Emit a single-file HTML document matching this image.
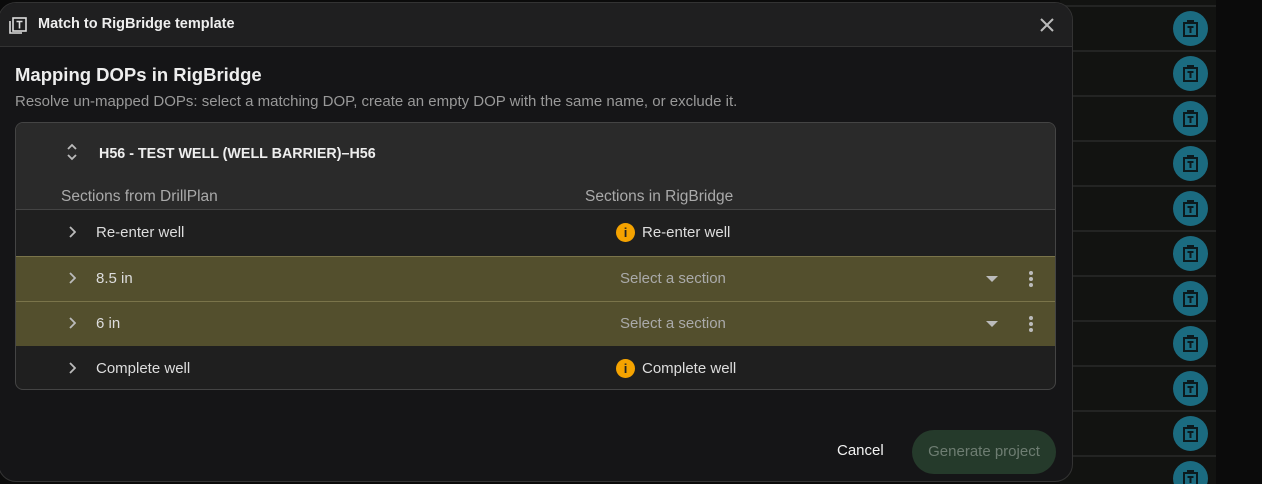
<!DOCTYPE html>
<html><head><style>
*{box-sizing:border-box;margin:0;padding:0}
html,body{width:1262px;height:484px;overflow:hidden}
body{background:#0b0b0b;font-family:"Liberation Sans",sans-serif;position:relative;color:#e6e6e6}
.bgcol{position:absolute;left:1060px;top:0;width:156px;height:484px;background:#121311}
.sep{position:absolute;left:1060px;width:156px;height:2px;background:#232423}
.tic{position:absolute;left:1173px;width:35px;height:35px;border-radius:50%;background:#1b6b80}
.tic svg{position:absolute;left:8px;top:8px}
.dlg{position:absolute;left:-2px;top:2px;width:1075px;height:480px;background:#151517;border:1px solid #333;border-radius:18px;overflow:hidden}
.hdr{height:44px;background:#1f1f20;border-bottom:1px solid #333;position:relative}
.hdr .t{position:absolute;left:39px;top:13px;font-size:14.5px;font-weight:bold;color:#eee}
.card{position:absolute;left:16px;top:119px;width:1041px;height:268px;border:1px solid #444;border-radius:8px;overflow:hidden;background:#1f1f1f}
.ch{height:87px;background:#2a2a2a;border-bottom:1px solid #444;position:relative}
.row{position:absolute;left:0;width:1041px;height:45px;font-size:15px;color:#ddd}
.row span{position:absolute;top:14px}
.hl{background:#534f2d;border-top:1px solid #7a744a}
.info{position:absolute;left:600px;top:13px;width:19px;height:19px;border-radius:50%;background:#f5a300;color:#222;font-size:13px;font-weight:bold;text-align:center;line-height:19px}
</style></head><body>
<div class="bgcol"></div>
<div class="sep" style="top:5px"></div><div class="sep" style="top:50px"></div><div class="sep" style="top:95px"></div><div class="sep" style="top:140px"></div><div class="sep" style="top:185px"></div><div class="sep" style="top:230px"></div><div class="sep" style="top:275px"></div><div class="sep" style="top:320px"></div><div class="sep" style="top:365px"></div><div class="sep" style="top:410px"></div><div class="sep" style="top:455px"></div>
<div class="tic" style="top:11px"><svg width="19" height="19" viewBox="0 0 19 19" fill="none" stroke="#0c1a1e" stroke-width="2"><rect x="3" y="4" width="13" height="13"/><path d="M7 4V2h5v2M6.5 8h6M9.5 8v6"/></svg></div>
<div class="tic" style="top:56px"><svg width="19" height="19" viewBox="0 0 19 19" fill="none" stroke="#0c1a1e" stroke-width="2"><rect x="3" y="4" width="13" height="13"/><path d="M7 4V2h5v2M6.5 8h6M9.5 8v6"/></svg></div>
<div class="tic" style="top:101px"><svg width="19" height="19" viewBox="0 0 19 19" fill="none" stroke="#0c1a1e" stroke-width="2"><rect x="3" y="4" width="13" height="13"/><path d="M7 4V2h5v2M6.5 8h6M9.5 8v6"/></svg></div>
<div class="tic" style="top:146px"><svg width="19" height="19" viewBox="0 0 19 19" fill="none" stroke="#0c1a1e" stroke-width="2"><rect x="3" y="4" width="13" height="13"/><path d="M7 4V2h5v2M6.5 8h6M9.5 8v6"/></svg></div>
<div class="tic" style="top:191px"><svg width="19" height="19" viewBox="0 0 19 19" fill="none" stroke="#0c1a1e" stroke-width="2"><rect x="3" y="4" width="13" height="13"/><path d="M7 4V2h5v2M6.5 8h6M9.5 8v6"/></svg></div>
<div class="tic" style="top:236px"><svg width="19" height="19" viewBox="0 0 19 19" fill="none" stroke="#0c1a1e" stroke-width="2"><rect x="3" y="4" width="13" height="13"/><path d="M7 4V2h5v2M6.5 8h6M9.5 8v6"/></svg></div>
<div class="tic" style="top:281px"><svg width="19" height="19" viewBox="0 0 19 19" fill="none" stroke="#0c1a1e" stroke-width="2"><rect x="3" y="4" width="13" height="13"/><path d="M7 4V2h5v2M6.5 8h6M9.5 8v6"/></svg></div>
<div class="tic" style="top:326px"><svg width="19" height="19" viewBox="0 0 19 19" fill="none" stroke="#0c1a1e" stroke-width="2"><rect x="3" y="4" width="13" height="13"/><path d="M7 4V2h5v2M6.5 8h6M9.5 8v6"/></svg></div>
<div class="tic" style="top:371px"><svg width="19" height="19" viewBox="0 0 19 19" fill="none" stroke="#0c1a1e" stroke-width="2"><rect x="3" y="4" width="13" height="13"/><path d="M7 4V2h5v2M6.5 8h6M9.5 8v6"/></svg></div>
<div class="tic" style="top:416px"><svg width="19" height="19" viewBox="0 0 19 19" fill="none" stroke="#0c1a1e" stroke-width="2"><rect x="3" y="4" width="13" height="13"/><path d="M7 4V2h5v2M6.5 8h6M9.5 8v6"/></svg></div>
<div class="tic" style="top:461px"><svg width="19" height="19" viewBox="0 0 19 19" fill="none" stroke="#0c1a1e" stroke-width="2"><rect x="3" y="4" width="13" height="13"/><path d="M7 4V2h5v2M6.5 8h6M9.5 8v6"/></svg></div>

<div class="dlg">
 <div class="hdr">
  <svg style="position:absolute;left:9px;top:12px" width="20" height="20" viewBox="0 0 20 20" fill="none" stroke="#ddd" stroke-width="1.6"><path d="M2 6v12h12"/><rect x="5" y="3" width="13" height="13"/><path d="M8.5 6.5h6M11.5 6.5v7"/></svg>
  <div class="t">Match to RigBridge template</div>
  <svg style="position:absolute;left:1041px;top:15px" width="14" height="14" viewBox="0 0 14 14" stroke="#bbb" stroke-width="2"><path d="M1 1l12 12M13 1L1 13"/></svg>
 </div>
 <div style="position:absolute;left:16px;top:61px;font-size:18.5px;font-weight:bold;color:#eee">Mapping DOPs in RigBridge</div>
 <div style="position:absolute;left:16px;top:90px;font-size:15px;color:#999">Resolve un-mapped DOPs: select a matching DOP, create an empty DOP with the same name, or exclude it.</div>
 <div class="card">
  <div class="ch">
   <svg style="position:absolute;left:50px;top:19px" width="12" height="20" viewBox="0 0 12 20" fill="none" stroke="#bbb" stroke-width="1.8"><path d="M2 7l4-4 4 4M2 13l4 4 4-4"/></svg>
   <div style="position:absolute;left:83px;top:23px;font-size:14.3px;font-weight:bold;color:#eee">H56 - TEST WELL (WELL BARRIER)–H56</div>
   <div style="position:absolute;left:45px;top:65px;font-size:15.5px;color:#aaa">Sections from DrillPlan</div>
   <div style="position:absolute;left:569px;top:65px;font-size:15.5px;color:#aaa">Sections in RigBridge</div>
  </div>
  <div class="row" style="top:87px"><svg style="position:absolute;left:52px;top:16px" width="8" height="12" viewBox="0 0 8 12" fill="none" stroke="#bbb" stroke-width="1.8"><path d="M2 1l5 5-5 5"/></svg><span style="left:80px">Re-enter well</span><div class="info">i</div><span style="left:626px">Re-enter well</span></div>
  <div class="row hl" style="top:133px"><svg style="position:absolute;left:52px;top:15px" width="8" height="12" viewBox="0 0 8 12" fill="none" stroke="#bbb" stroke-width="1.8"><path d="M2 1l5 5-5 5"/></svg><span style="left:80px;top:13px">8.5 in</span><span style="left:604px;top:13px;color:#aaa">Select a section</span><svg style="position:absolute;left:970px;top:19px" width="12" height="6"><path d="M0 0h12L6 6z" fill="#bbb"/></svg><svg style="position:absolute;left:1013px;top:14px" width="4" height="16" fill="#bbb"><circle cx="2" cy="2" r="2"/><circle cx="2" cy="8" r="2"/><circle cx="2" cy="14" r="2"/></svg></div>
  <div class="row hl" style="top:178px"><svg style="position:absolute;left:52px;top:15px" width="8" height="12" viewBox="0 0 8 12" fill="none" stroke="#bbb" stroke-width="1.8"><path d="M2 1l5 5-5 5"/></svg><span style="left:80px;top:13px">6 in</span><span style="left:604px;top:13px;color:#aaa">Select a section</span><svg style="position:absolute;left:970px;top:19px" width="12" height="6"><path d="M0 0h12L6 6z" fill="#bbb"/></svg><svg style="position:absolute;left:1013px;top:14px" width="4" height="16" fill="#bbb"><circle cx="2" cy="2" r="2"/><circle cx="2" cy="8" r="2"/><circle cx="2" cy="14" r="2"/></svg></div>
  <div class="row" style="top:223px"><svg style="position:absolute;left:52px;top:16px" width="8" height="12" viewBox="0 0 8 12" fill="none" stroke="#bbb" stroke-width="1.8"><path d="M2 1l5 5-5 5"/></svg><span style="left:80px">Complete well</span><div class="info">i</div><span style="left:626px">Complete well</span></div>
 </div>
 <div style="position:absolute;left:838px;top:439px;font-size:15px;color:#f2f2f2">Cancel</div>
 <div style="position:absolute;left:913px;top:427px;width:144px;height:44px;border-radius:22px;background:#253a2b;color:#6e7d72;font-size:15px;text-align:center;line-height:44px">Generate project</div>
</div>
</body></html>
